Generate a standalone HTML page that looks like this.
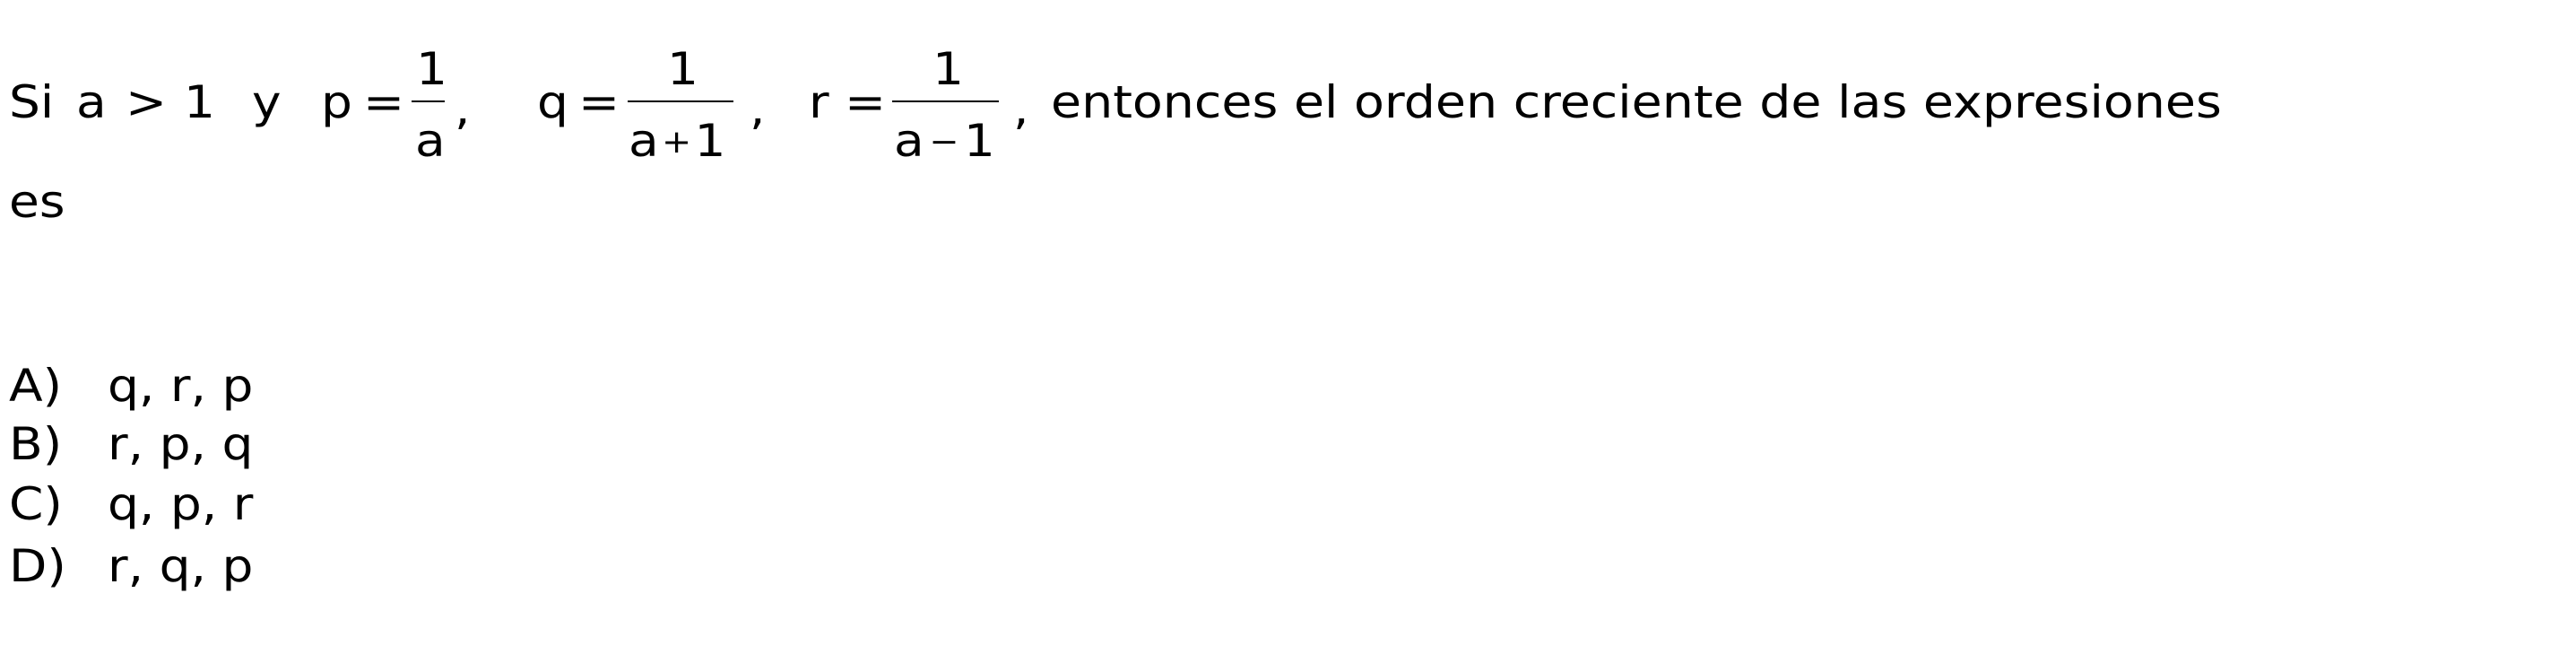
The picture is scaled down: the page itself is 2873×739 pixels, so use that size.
<!DOCTYPE html>
<html><head><meta charset="utf-8"><style>
html,body{margin:0;padding:0;background:#fff;width:2873px;height:739px;overflow:hidden}
body{position:relative;font-family:"DejaVu Sans","Liberation Sans",sans-serif;font-size:50px;color:#000}
.t{position:absolute;white-space:pre;line-height:1;transform:scaleX(1.1);transform-origin:0 0}
.b{position:absolute;height:2px;background:#000}
</style></head><body>
<div class="t" style="left:10px;top:89px">Si</div>
<div class="t" style="left:85px;top:89px">a</div>
<div class="t" style="left:140px;top:89px">&gt;</div>
<div class="t" style="left:205px;top:89px">1</div>
<div class="t" style="left:281px;top:89px">y</div>
<div class="t" style="left:358px;top:89px">p</div>
<div class="t" style="left:405px;top:89px">=</div>
<div class="t" style="left:464px;top:52px">1</div>
<div class="b" style="left:459px;top:112px;width:37px"></div>
<div class="t" style="left:463px;top:132px">a</div>
<div class="t" style="left:507px;top:96px">,</div>
<div class="t" style="left:599px;top:89px">q</div>
<div class="t" style="left:645px;top:89px">=</div>
<div class="t" style="left:744px;top:52px">1</div>
<div class="b" style="left:700px;top:112px;width:118px"></div>
<div class="t" style="left:701px;top:132px">a<span style="font-size:36px;position:relative;top:-4px;margin:0 3px">+</span>1</div>
<div class="t" style="left:836px;top:96px">,</div>
<div class="t" style="left:902px;top:89px">r</div>
<div class="t" style="left:942px;top:89px">=</div>
<div class="t" style="left:1040px;top:52px">1</div>
<div class="b" style="left:995px;top:112px;width:119px"></div>
<div class="t" style="left:997px;top:132px">a<span style="font-size:36px;position:relative;top:-4px;margin:0 5px">−</span>1</div>
<div class="t" style="left:1130px;top:96px">,</div>
<div class="t" style="left:1172px;top:89px;transform:scaleX(1.108)">entonces el orden creciente de las expresiones</div>
<div class="t" style="left:10px;top:200px">es</div>
<div class="t" style="left:10px;top:405px">A)</div><div class="t" style="left:120px;top:405px">q, r, p</div>
<div class="t" style="left:10px;top:470px">B)</div><div class="t" style="left:120px;top:470px">r, p, q</div>
<div class="t" style="left:10px;top:537px">C)</div><div class="t" style="left:120px;top:537px">q, p, r</div>
<div class="t" style="left:10px;top:606px">D)</div><div class="t" style="left:120px;top:606px">r, q, p</div>
</body></html>
